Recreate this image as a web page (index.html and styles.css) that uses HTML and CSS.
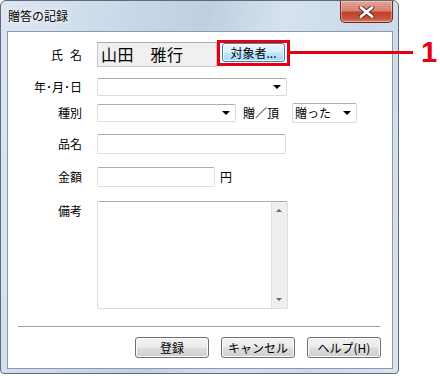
FILE: index.html
```html
<!DOCTYPE html>
<html lang="ja">
<head>
<meta charset="utf-8">
<link rel="stylesheet" href="styles.css">
</head>
<body>
<div class="window">
  <div class="titlebar">
    <span class="title">贈答の記録</span>
    <div class="close">
      <svg width="17" height="12" viewBox="0 0 17 12">
        <path d="M3 1.5 L14 10.5 M14 1.5 L3 10.5" stroke="#5a2a20" stroke-width="4.6" stroke-linecap="round"/>
        <path d="M3 1.5 L14 10.5 M14 1.5 L3 10.5" stroke="#ffffff" stroke-width="2.8" stroke-linecap="round"/>
      </svg>
    </div>
  </div>
  <div class="content">
    <div class="row r1">
      <span class="label">氏<span class="sp"></span>名</span>
      <div class="field">
        <div class="namebox">山田　雅行</div>
        <div class="btn btn-focus">対象者...</div>
      </div>
    </div>
    <div class="row r2">
      <span class="label">年･月･日</span>
      <div class="field">
        <div class="combo w-date"><span class="arrow"></span></div>
      </div>
    </div>
    <div class="row r3">
      <span class="label">種別</span>
      <div class="field">
        <div class="combo w-kind"><span class="arrow"></span></div>
        <span class="inline-text">贈／頂</span>
        <div class="combo w-give"><span class="ctext">贈った</span><span class="arrow"></span></div>
      </div>
    </div>
    <div class="row r4">
      <span class="label">品名</span>
      <div class="field">
        <div class="textbox w-item"></div>
      </div>
    </div>
    <div class="row r5">
      <span class="label">金額</span>
      <div class="field">
        <div class="textbox w-amount"></div>
        <span class="yen">円</span>
      </div>
    </div>
    <div class="row r6">
      <span class="label label-top">備考</span>
      <div class="field">
        <div class="textarea">
          <div class="scroll">
            <span class="sarrow up"></span>
            <span class="sarrow down"></span>
          </div>
        </div>
      </div>
    </div>
    <div class="separator"></div>
    <div class="buttons">
      <div class="btn btn-foot">登録</div>
      <div class="btn btn-foot">キャンセル</div>
      <div class="btn btn-foot">ヘルプ(H)</div>
    </div>
  </div>
</div>
<div class="callout-box"></div>
<div class="callout-line"></div>
<div class="callout-num">1</div>
</body>
</html>
```
FILE: styles.css
```css
* { box-sizing: border-box; }
html, body { margin: 0; padding: 0; background: #ffffff; }
body {
  width: 440px;
  height: 376px;
  overflow: hidden;
  font-family: "Noto Sans CJK JP", "Liberation Sans", sans-serif;
  font-size: 12px;
  color: #000;
}
.window {
  width: 399px;
  height: 374px;
  border: 1px solid #5f6b79;
  border-radius: 6px 6px 4px 4px;
  background: linear-gradient(100deg, #dce7f2 0%, #c8d7e8 30%, #bfcfe1 45%, #d6e2ee 62%, #cad9ea 80%, #d8e3ef 100%);
  padding: 0 5px 4px 6px;
  display: flex;
  flex-direction: column;
}
.titlebar {
  height: 30px;
  display: flex;
  justify-content: space-between;
  align-items: flex-start;
}
.title {
  margin-top: 6px;
  padding-left: 1px;
  font-size: 12px;
  line-height: 18px;
  color: #000;
  text-shadow: 0 0 6px #ffffff, 0 0 3px #ffffff;
}
.close {
  width: 53px;
  height: 22px;
  border: 1px solid #6d2a20;
  border-top: none;
  border-radius: 0 0 5px 5px;
  background: linear-gradient(#e6a496 0%, #d8826f 45%, #c2412a 55%, #c8553c 85%, #d98a72 100%);
  box-shadow: inset 0 0 0 1px rgba(255,255,255,0.35);
  display: flex;
  align-items: center;
  justify-content: center;
}
.content {
  flex: 1;
  background: #ffffff;
  border: 1px solid #8c9aab;
  display: flex;
  flex-direction: column;
}
.row {
  display: grid;
  grid-template-columns: 74px 1fr;
  column-gap: 15px;
  align-items: center;
}
.r1 { margin-top: 10px; height: 25px; }
.r2 { margin-top: 11px; height: 18px; }
.r3 { margin-top: 7px; height: 20px; }
.r4 { margin-top: 11px; height: 20px; }
.r5 { margin-top: 13px; height: 20px; }
.r6 { margin-top: 14px; height: 108px; align-items: start; }
.label {
  text-align: right;
  line-height: 16px;
  white-space: nowrap;
}
.sp { display: inline-block; width: 7px; }
.label-top { margin-top: 2px; }
.field {
  display: flex;
  align-items: center;
  height: 100%;
}
.r1 .field { align-items: flex-start; }
.namebox {
  width: 120px;
  height: 25px;
  background: #f0f0f0;
  border: 1px solid #c4c8ce;
  border-top-color: #a9adb3;
  font-size: 16px;
  line-height: 23px;
  padding-left: 3px;
  letter-spacing: 0.5px;
}
.btn {
  display: flex;
  align-items: center;
  justify-content: center;
  border: 1px solid #707070;
  border-radius: 3px;
  background: linear-gradient(#f2f2f2 0%, #ebebeb 48%, #dddddd 52%, #cfcfcf 100%);
  box-shadow: inset 0 0 0 1px #fcfcfc;
  font-size: 12px;
  line-height: 14px;
}
.btn-focus {
  width: 63px;
  height: 19px;
  margin-left: 5px;
  margin-top: 1px;
  border-color: #3c7fb1;
  background: linear-gradient(#eaf6fd 0%, #d9f0fc 48%, #bee6fd 52%, #a7d9f5 100%);
}
.combo, .textbox, .textarea {
  position: relative;
  background: #ffffff;
  border: 1px solid #d8dde4;
  border-top-color: #abadb3;
  border-radius: 2px;
}
.combo { height: 18px; display: flex; align-items: center; }
.w-date { width: 190px; }
.w-kind { width: 139px; }
.w-give { width: 65px; height: 20px; margin-left: 13px; }
.ctext { padding-left: 2px; line-height: 16px; }
.arrow {
  position: absolute;
  right: 5px;
  top: 50%;
  margin-top: -2px;
  width: 0;
  height: 0;
  border-left: 4px solid transparent;
  border-right: 4px solid transparent;
  border-top: 4px solid #000;
}
.inline-text { margin-left: 7px; line-height: 16px; }
.textbox { height: 20px; }
.w-item { width: 189px; }
.w-amount { width: 118px; }
.yen { margin-left: 5px; line-height: 16px; }
.textarea {
  width: 191px;
  height: 108px;
  display: flex;
  justify-content: flex-end;
}
.scroll {
  width: 16px;
  height: 100%;
  background: #efefef;
  border-left: 1px solid #e2e2e2;
  position: relative;
}
.sarrow {
  position: absolute;
  left: 4px;
  width: 0;
  height: 0;
  border-left: 3px solid transparent;
  border-right: 3px solid transparent;
}
.sarrow.up { top: 7px; border-bottom: 3px solid #6a6a6a; }
.sarrow.down { bottom: 7px; border-top: 3px solid #6a6a6a; }
.separator {
  margin: 17px 12px 0 10px;
  height: 2px;
  border-top: 1px solid #a0a0a0;
  border-bottom: 1px solid #ffffff;
}
.buttons {
  margin-top: 9px;
  margin-right: 11px;
  display: flex;
  justify-content: flex-end;
  gap: 12px;
}
.btn-foot { width: 74px; height: 21px; }
.callout-box {
  position: absolute;
  left: 217px;
  top: 40px;
  width: 73px;
  height: 26px;
  border: 3px solid #e60012;
}
.callout-line {
  position: absolute;
  left: 290px;
  top: 51px;
  width: 123px;
  height: 3px;
  background: #e60012;
}
.callout-num {
  position: absolute;
  left: 421px;
  top: 34px;
  font-family: "Liberation Sans", sans-serif;
  font-weight: bold;
  font-size: 29px;
  line-height: 36px;
  color: #e60012;
}
```
